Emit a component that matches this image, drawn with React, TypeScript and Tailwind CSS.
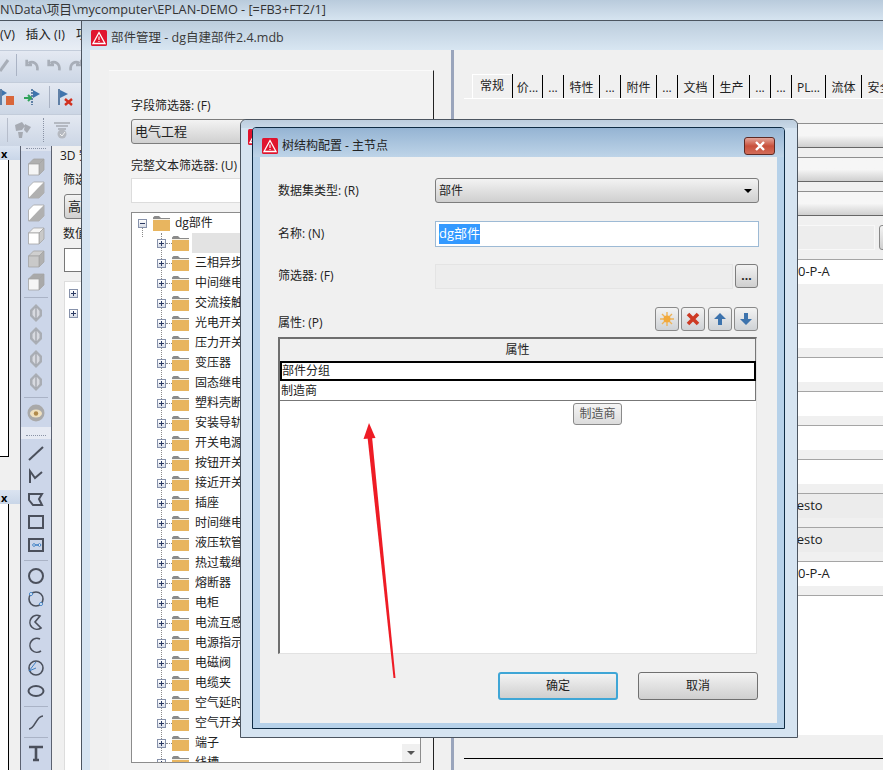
import React from "react";

const FONT = "font-['Open_Sans','Noto_Sans_CJK_SC',sans-serif]";

const TREE_ROWS = [
  "",
  "三相异步电机",
  "中间继电器",
  "交流接触器",
  "光电开关",
  "压力开关",
  "变压器",
  "固态继电器",
  "塑料壳断路器",
  "安装导轨",
  "开关电源",
  "按钮开关",
  "接近开关",
  "插座",
  "时间继电器",
  "液压软管",
  "热过载继电器",
  "熔断器",
  "电柜",
  "电流互感器",
  "电源指示灯",
  "电磁阀",
  "电缆夹",
  "空气延时头",
  "空气开关",
  "端子",
  "线槽",
];

const TABS = [
  { label: "价...", w: 30 },
  { label: "...", w: 21 },
  { label: "特性", w: 36 },
  { label: "...", w: 21 },
  { label: "附件", w: 36 },
  { label: "...", w: 21 },
  { label: "文档", w: 36 },
  { label: "生产", w: 36 },
  { label: "...", w: 21 },
  { label: "...", w: 21 },
  { label: "PL...", w: 34 },
  { label: "流体", w: 36 },
  { label: "安全", w: 36 },
];

function AppIcon({ className }: { className?: string }) {
  return (
    <svg viewBox="0 0 16 16" className={className}>
      <rect width="16" height="16" rx="1.5" fill="#e0142e" />
      <path d="M8 2.5 14 13.5H2Z" fill="none" stroke="#fff" strokeWidth="1.3" />
      <path d="M8 6.5V10M8 11V12" stroke="#fff" strokeWidth="1.1" />
    </svg>
  );
}

function Folder({ className }: { className?: string }) {
  return (
    <svg viewBox="0 0 17 15" className={className}>
      <path d="M0 3V1.5L1.5 0H6L8 2H17V3Z" fill="#8b8b8b" />
      <rect y="3" width="17" height="1" fill="#f6f1e6" />
      <rect y="4" width="17" height="11" fill="#e8b55f" />
    </svg>
  );
}

function Expander({ open }: { open?: boolean }) {
  return (
    <span className="relative block h-[9px] w-[9px] shrink-0 border border-[#8792ab] bg-linear-to-b from-white to-[#d6dbe6]">
      <span className="absolute left-[1px] top-[3px] h-[1px] w-[5px] bg-[#2b3a63]" />
      {!open && <span className="absolute left-[3px] top-[1px] h-[5px] w-[1px] bg-[#2b3a63]" />}
    </span>
  );
}

function Cube({ top, side, front }: { top: string; side: string; front: string }) {
  return (
    <svg viewBox="0 0 18 18" className="h-[18px] w-[18px]">
      <path d="M1.5 6 6.5 1H17L12 6Z" fill={top} stroke="#a5a5a5" strokeWidth=".8" />
      <path d="M12 6 17 1V12L12 17Z" fill={side} stroke="#a5a5a5" strokeWidth=".8" />
      <path d="M1.5 6H12V17H1.5Z" fill={front} stroke="#a5a5a5" strokeWidth=".8" />
    </svg>
  );
}

function SplitCube() {
  return (
    <svg viewBox="0 0 18 18" className="h-[18px] w-[18px]">
      <path d="M1.5 6 6.5 1H17V12L12 17H1.5Z" fill="#fff" stroke="#a5a5a5" strokeWidth=".8" />
      <path d="M1.5 17 12 6 17 1V12L12 17Z" fill="#b0b0b0" />
    </svg>
  );
}

function Leaf() {
  return (
    <svg viewBox="0 0 14 18" className="h-[18px] w-[14px]">
      <path d="M7 0 13 6V12L7 18 1 12V6Z" fill="#a9adb4" />
      <path d="M7 3 10.5 7V11L7 15 3.5 11V7Z" fill="#d8dae0" />
      <path d="M7 3V15" stroke="#8f9299" />
    </svg>
  );
}

function ToolSep() {
  return <div className="my-[6px] h-[1px] w-[24px] bg-[#aab3c6]" />;
}

function ThinSep() {
  return <div className="my-[3.5px] h-[1px] w-[24px] bg-[#aab3c6]" />;
}

function Tool({ children }: { children: React.ReactNode }) {
  return (
    <svg viewBox="0 0 18 18" className="my-[2.5px] h-[18px] w-[18px]" fill="none" stroke="#4b505c" strokeWidth="2">
      {children}
    </svg>
  );
}

function Toolbox() {
  return (
    <div className="flex h-full w-[32px] flex-col items-center border-x border-[#5b6170] bg-[#ccd6e9]">
      <div className="flex w-full justify-center bg-[#dde3ef] py-[2px]">
        <div className="w-[20px] border-t border-dotted border-[#8a93a5]" />
      </div>
      <div className="mt-[7px] flex flex-col items-center gap-[5px]">
        <Cube top="#b0b0b0" side="#b0b0b0" front="#f5f5f5" />
        <SplitCube />
        <SplitCube />
        <Cube top="#f5f5f5" side="#c9c9c9" front="#fff" />
        <Cube top="#cfcfcf" side="#b0b0b0" front="#c9c9c9" />
        <Cube top="#a9a9a9" side="#a9a9a9" front="#f5f5f5" />
      </div>
      <ToolSep />
      <div className="flex flex-col items-center gap-[5px]">
        <Leaf />
        <Leaf />
        <Leaf />
        <Leaf />
      </div>
      <ToolSep />
      <svg viewBox="0 0 18 18" className="h-[18px] w-[18px] shrink-0">
        <circle cx="9" cy="9" r="8.5" fill="#a9a9a9" />
        <ellipse cx="9" cy="9.5" rx="6" ry="4" fill="#efe0bf" />
        <circle cx="9" cy="9.5" r="2.2" fill="#b08a4a" />
      </svg>
      <div className="mt-[5px] flex h-[12px] w-full shrink-0 justify-center bg-[#e6eaf3] pt-[8px]">
        <div className="w-[20px] border-t border-dotted border-[#8a93a5]" />
      </div>
      <div className="mt-[2px] flex flex-col items-center">
        <Tool>
          <path d="M2 16 16 3" />
        </Tool>
        <Tool>
          <path d="M3 16V4L8 11 15 5" />
        </Tool>
        <Tool>
          <path d="M2 4H15L12 9 15 15H6L2 10Z" />
        </Tool>
        <Tool>
          <rect x="2" y="3" width="14" height="12" />
        </Tool>
        <Tool>
          <rect x="2" y="3" width="14" height="12" />
          <path d="M7 9H12" stroke="#3f7fc4" strokeWidth="1.5" />
          <circle cx="7" cy="9" r="1.3" stroke="#3f7fc4" strokeWidth="1" fill="#fff" />
          <circle cx="12.5" cy="9" r="1.3" stroke="#3f7fc4" strokeWidth="1" fill="#fff" />
        </Tool>
        <ThinSep />
        <Tool>
          <circle cx="9" cy="9" r="7" />
        </Tool>
        <Tool>
          <circle cx="9" cy="9" r="7" strokeWidth="1.6" />
          <circle cx="4" cy="4" r="1.5" stroke="#3f7fc4" strokeWidth="1" fill="#fff" />
          <circle cx="14" cy="14" r="1.5" stroke="#3f7fc4" strokeWidth="1" fill="#fff" />
        </Tool>
        <Tool>
          <path d="M13 3A7 7 0 1 0 14 15L8 9Z" strokeWidth="1.6" />
        </Tool>
        <Tool>
          <path d="M13 3A7 7 0 1 0 14 15" strokeWidth="1.6" />
        </Tool>
        <Tool>
          <circle cx="9" cy="9" r="7" strokeWidth="1.6" />
          <path d="M2 12 9 3M2 12 9 9" stroke="#3f7fc4" strokeWidth="1" />
        </Tool>
        <Tool>
          <ellipse cx="9" cy="9" rx="7.5" ry="5" />
        </Tool>
        <ThinSep />
        <Tool>
          <path d="M2 16C8 16 9 3 16 3" strokeWidth="1.6" />
        </Tool>
        <ThinSep />
        <Tool>
          <path d="M2 3H16M9 3V16M6 16H12" strokeWidth="2.6" />
        </Tool>
      </div>
    </div>
  );
}

function PaneHeader() {
  return (
    <div className="flex h-[14px] shrink-0 items-center bg-linear-to-b from-[#dbe4f1] to-[#c9d6e8] pl-[1px] text-[11px] font-bold leading-none text-black">
      x
    </div>
  );
}

function SideDock() {
  return (
    <div className="flex h-full w-[20px] flex-col bg-[#f0f0f0]">
      <div className="flex h-[344px] flex-col">
        <PaneHeader />
        <div className="h-[297px] w-[9px] border-r border-b border-black bg-white" />
      </div>
      <div className="flex flex-1 flex-col">
        <PaneHeader />
        <div className="flex-1 w-[9px] border-r border-black bg-white" />
      </div>
    </div>
  );
}

function GreyUndo({ flip }: { flip?: boolean }) {
  return (
    <svg viewBox="0 0 18 18" className={`h-[16px] w-[16px] ${flip ? "-scale-x-100" : ""}`} fill="none" stroke="#a8aeb8" strokeWidth="3">
      <path d="M15 15C16 7 10 4 5 7M3 3V9H9" />
    </svg>
  );
}

function Toolbars() {
  return (
    <div className="shrink-0 text-[12px] text-[#222]">
      <div className="flex h-[29px] items-center gap-[11px] bg-linear-to-b from-[#d3deeb] to-[#e9eef5] pl-0 pr-2 text-[12.5px]">
        <span>(V)</span>
        <span>插入 (I)</span>
        <span>项目</span>
      </div>
      <div className="flex h-[32px] items-center gap-[6px] border-t border-[#c3ccda] bg-linear-to-b from-[#e4e9f2] to-[#ccd6e5] pb-[3px]">
        <svg viewBox="0 0 10 18" className="h-[18px] w-[10px]">
          <path d="M0 15 8 4" stroke="#a8aeb8" strokeWidth="3" />
        </svg>
        <div className="h-[22px] w-[1px] bg-[#aab3c4]" />
        <div className="ml-[1px] flex gap-[6px]">
          <GreyUndo />
          <GreyUndo />
          <GreyUndo flip />
        </div>
      </div>
      <div className="flex h-[32px] items-center border-t border-[#c3ccda] bg-linear-to-b from-[#e4e9f2] to-[#ccd6e5] pb-[3px]">
        <svg viewBox="0 0 16 18" className="h-[18px] w-[16px]">
          <path d="M1 1V17" stroke="#39618f" strokeWidth="1.5" />
          <path d="M2 2 7 5 2 8Z" fill="#3f74ad" />
          <rect x="6" y="8" width="8" height="9" fill="#d9663a" />
        </svg>
        <svg viewBox="0 0 18 18" className="ml-[7px] h-[18px] w-[18px]">
          <path d="M9 1V17" stroke="#39618f" strokeDasharray="2 1" strokeWidth="1.5" />
          <path d="M10 2 17 6 10 10Z" fill="#3f74ad" />
          <path d="M1 10H7M5 7 8 10 5 13" stroke="#2fa35a" strokeWidth="2" fill="none" />
        </svg>
        <div className="ml-[8px] h-[22px] w-[1px] bg-[#aab3c4]" />
        <svg viewBox="0 0 18 18" className="ml-[7px] h-[18px] w-[18px]">
          <path d="M2 1V17" stroke="#39618f" strokeWidth="1.5" />
          <path d="M3 2 11 6 3 10Z" fill="#3f74ad" />
          <path d="M8 11 15 17M15 11 8 17" stroke="#d1301f" strokeWidth="2.4" />
        </svg>
      </div>
      <div className="flex h-[32px] items-center border-t border-[#c3ccda] bg-linear-to-b from-[#e4e9f2] to-[#ccd6e5] pb-[2px]">
        <div className="ml-[7px] h-[24px] w-[1px] bg-[#b6bdcb]" />
        <svg viewBox="0 0 18 18" className="ml-[6px] h-[18px] w-[18px]">
          <path d="M1 4 8 1 11 5 8 9 2 10ZM11 3 17 6 13 12 10 9ZM4 11 9 11 8 17 5 17Z" fill="#a6aab2" />
        </svg>
        <div className="ml-[11px] h-[24px] w-[1px] border-l border-dotted border-[#8a93a5]" />
        <svg viewBox="0 0 18 18" className="ml-[9px] h-[18px] w-[18px]">
          <path d="M1 2H17M3 5H15M5 8H13" stroke="#a6aab2" strokeWidth="1.5" />
          <circle cx="9" cy="13" r="4.5" fill="#b5b9c0" />
          <path d="M7 13 9 15 12 11" stroke="#f2f2f2" fill="none" />
        </svg>
      </div>
    </div>
  );
}

function TreePanel() {
  return (
    <div className="relative mt-[9px] h-[551px] w-[290px] overflow-hidden border border-[#8c8c8c] bg-white text-[12px] text-[#222]">
      {/* dotted tree guides */}
      <div className="absolute left-[29px] top-[20px] h-[530px] border-l border-dotted border-[#8a8a8a]" />
      <div className="absolute left-[10px] top-[14px] h-[10px] border-l border-dotted border-[#8a8a8a]" />
      <div className="flex h-[20px] items-center pl-[6px]">
        <Expander open />
        <Folder className="ml-[6px] h-[15px] w-[17px]" />
        <span className="ml-[5px]">dg部件</span>
      </div>
      {TREE_ROWS.map((name, i) => (
        <div key={i} className="relative flex h-[20px] items-center pl-[25px]">
          <Expander />
          <span className="w-[6px] border-t border-dotted border-[#8a8a8a]" />
          <Folder className="h-[15px] w-[17px]" />
          {name ? <span className="ml-[6px]">{name}</span> : <span className="ml-[3px] h-[20px] w-[60px] bg-[#e3e3e3]" />}
        </div>
      ))}
      <div className="absolute bottom-0 right-0 flex h-[18px] w-[18px] items-center justify-center bg-[#f0f0f0]">
        <div className="h-0 w-0 border-x-[4px] border-t-[4px] border-x-transparent border-t-[#555]" />
      </div>
    </div>
  );
}

function LeftPane() {
  return (
    <div className="h-full w-[361px] shrink-0 bg-[#f0f0f0] pl-[19px] pt-[20px]">
      <div className="h-[700px] w-[325px] border-r border-t border-r-[#222] border-t-[#fafafa] bg-[#f2f2f2] pl-[22px] pt-[26px] text-[12px] text-[#222]">
        <div className="h-[17px] leading-[17px]">字段筛选器: (F)</div>
        <div className="mt-[5px] flex h-[25px] w-[290px] items-center rounded-[3px] border border-[#7d7d7d] bg-linear-to-b from-[#f3f3f3] to-[#d0d0d0] pl-[3px] text-[13px]">
          电气工程
        </div>
        <div className="mt-[13px] h-[17px] leading-[17px]">完整文本筛选器: (U)</div>
        <div className="mt-[4px] h-[25px] w-[290px] border border-[#dcdcdc] bg-white" />
        <TreePanel />
      </div>
    </div>
  );
}

function Tabs() {
  return (
    <div className="ml-[18px] flex h-[24px] items-end text-[12px] text-[#222]">
      <div className="flex h-[24px] w-[41px] items-center justify-center border-r border-black bg-[#f0f0f0] pb-[1px] shadow-[inset_1px_1px_0_#fff]">
        常规
      </div>
      {TABS.map((t, i) => (
        <div
          key={i}
          style={{ width: t.w }}
          className="flex h-[23px] shrink-0 items-center justify-center whitespace-nowrap border-r border-black pt-[3px]"
        >
          {t.label}
        </div>
      ))}
    </div>
  );
}

function Field({ kind, text, pad }: { kind: "select" | "white" | "grey"; text?: string; pad?: string }) {
  const cls =
    kind === "select"
      ? "border-b border-t border-b-[#666] border-t-[#8f8f8f] bg-linear-to-b from-[#f6f6f6] from-50% to-[#cfcfcf]"
      : kind === "white"
        ? "border-t border-t-[#a5a5a5] bg-white"
        : "border-t border-t-[#a5a5a5] bg-[#ececec]";
  return <div className={`flex h-[25px] items-center text-[13px] text-[#222] ${pad} ${cls}`}>{text}</div>;
}

function RightPane() {
  return (
    <div className="h-full flex-1 bg-[#f0f0f0] pt-[24px]">
      <Tabs />
      <div className="ml-[10px] border-t border-white pt-[24px]">
        <div className="flex flex-col gap-[9px]">
          <Field kind="select" />
          <Field kind="select" />
          <Field kind="select" />
          <div className="flex h-[25px] gap-[4px]">
            <div className="w-[411px] border border-[#f8f8f8] bg-[#ededed]" />
            <div className="flex-1 rounded-l-[3px] border border-[#888] bg-linear-to-b from-[#f3f3f3] to-[#d0d0d0]" />
          </div>
          <Field kind="white" text="0-P-A" pad="pl-[334px]" />
          <div className="h-[21px]" />
          <Field kind="white" />
          <Field kind="white" />
          <Field kind="white" />
          <Field kind="white" />
          <Field kind="white" />
          <Field kind="grey" text="Festo" pad="pl-[326px]" />
          <Field kind="grey" text="Festo" pad="pl-[326px]" />
          <Field kind="white" text="0-P-A" pad="pl-[334px]" />
          <div className="h-[140px] border-t border-t-[#a5a5a5] bg-white" />
        </div>
        <div className="h-[24px] border-b border-black bg-[#f0f0f0]" />
      </div>
    </div>
  );
}

function PartsWindow() {
  return (
    <div className={`absolute left-[81px] top-[20px] flex h-[750px] w-[802px] flex-col border-l border-[#4c5560] bg-[#d6e4f1] ${FONT}`}>
      <div className="flex h-[30px] shrink-0 items-center border-t border-[#4c5560] bg-linear-to-b from-[#bccddd] to-[#d8e6f2] pl-[9px] pt-[5px] text-[12.5px] text-[#3a3a3a]">
        <AppIcon className="h-[16px] w-[16px]" />
        <span className="ml-[4px]">部件管理 - dg自建部件2.4.mdb</span>
      </div>
      <div className="ml-[8px] flex flex-1 overflow-hidden">
        <LeftPane />
        <div className="w-[3px] shrink-0 bg-[#9aa5bc]" />
        <RightPane />
      </div>
    </div>
  );
}

function IconButton({ children }: { children: React.ReactNode }) {
  return (
    <div className="flex h-[24px] w-[24px] items-center justify-center rounded-[3px] border border-[#8a8a8a] bg-linear-to-b from-[#f3f3f3] to-[#cfd2d6]">
      {children}
    </div>
  );
}

function FormRow({ label, children, className }: { label: string; children: React.ReactNode; className?: string }) {
  return (
    <div className={`flex items-center ${className}`}>
      <div className="w-[157px] shrink-0">{label}</div>
      {children}
    </div>
  );
}

function ConfigDialog() {
  return (
    <div className={`absolute left-[240px] top-[119px] h-[619px] w-[558px] rounded-t-[6px] border border-[#4c5560] bg-[#d6e4f1] ${FONT}`}>
      <div className="h-[8px] rounded-t-[6px] bg-linear-to-b from-[#bccddd] to-[#c9d9e8]" />
      <AppIcon className="absolute left-[7px] top-[9px] h-[16px] w-[16px]" />
      {/* the dialog on top */}
      <div className="absolute left-[11px] top-[7px] flex h-[602px] w-[533px] flex-col rounded-t-[4px] border border-[#0f2c44] bg-[#b6d1e9] px-[7px] pb-[5px]">
        <div className="-mx-[7px] flex h-[29px] shrink-0 items-center rounded-t-[3px] bg-linear-to-b from-[#95b4d3] to-[#bed4e8] pl-[9px] pt-[6px] text-[12px] text-[#222]">
          <AppIcon className="h-[16px] w-[16px]" />
          <span className="ml-[4px]">树结构配置 - 主节点</span>
          <div className="ml-auto mr-[9px] flex h-[18px] w-[31px] items-center justify-center rounded-[3px] border border-[#5d2a24] bg-linear-to-b from-[#e3a59a] via-[#c8503c] to-[#d26c58]">
            <svg viewBox="0 0 12 10" className="h-[10px] w-[12px]">
              <path d="M2 1 10 9M10 1 2 9" stroke="#fff" strokeWidth="2.4" />
            </svg>
          </div>
        </div>
        <div className="flex-1 bg-[#f0f0f0] pl-[18px] pt-[21px] text-[12px] text-[#222]">
          <FormRow label="数据集类型: (R)" className="h-[25px]">
            <div className="flex h-[25px] w-[324px] items-center justify-between rounded-[3px] border border-[#7d7d7d] bg-linear-to-b from-[#f3f3f3] to-[#cfcfcf] pl-[3px] pr-[6px]">
              部件
              <div className="h-0 w-0 border-x-[4px] border-t-[4px] border-x-transparent border-t-black" />
            </div>
          </FormRow>
          <FormRow label="名称: (N)" className="mt-[18px] h-[26px]">
            <div className="flex h-[26px] w-[324px] items-center border border-[#9dbad5] bg-white pl-[3px] text-[13px]">
              <span className="bg-[#3399ff] text-white">dg部件</span>
            </div>
          </FormRow>
          <FormRow label="筛选器: (F)" className="mt-[16px] h-[26px]">
            <div className="h-[25px] w-[298px] border border-[#e4e4e4] bg-[#ededed]" />
            <div className="ml-[2px] flex h-[24px] w-[23px] items-center justify-center rounded-[3px] border border-[#7d7d7d] bg-linear-to-b from-[#f3f3f3] to-[#cfcfcf] text-[12px] font-bold leading-none">
              ...
            </div>
          </FormRow>
          <div className="mt-[18px] flex h-[24px] w-[480px] items-end justify-between">
            <div className="leading-[17px]">属性: (P)</div>
            <div className="flex items-center gap-[2.5px]">
              <IconButton>
                <svg viewBox="0 0 14 14" className="h-[14px] w-[14px]">
                  <path d="M7 0V14M0 7H14M2 2 12 12M12 2 2 12" stroke="#eeb356" strokeWidth="1.4" />
                  <circle cx="7" cy="7" r="3.5" fill="#f2a93b" />
                </svg>
              </IconButton>
              <IconButton>
                <svg viewBox="0 0 14 14" className="h-[14px] w-[14px]">
                  <path d="M2 2 12 12M12 2 2 12" stroke="#cd3a24" strokeWidth="3.6" />
                </svg>
              </IconButton>
              <IconButton>
                <svg viewBox="0 0 14 14" className="h-[14px] w-[14px]">
                  <path d="M7 1 13 7H9V13H5V7H1Z" fill="#3d73ad" />
                </svg>
              </IconButton>
              <IconButton>
                <svg viewBox="0 0 14 14" className="h-[14px] w-[14px]">
                  <path d="M7 13 13 7H9V1H5V7H1Z" fill="#3d73ad" />
                </svg>
              </IconButton>
            </div>
          </div>
          <div className="relative mt-[6px] h-[317px] w-[479px] border-b border-l-2 border-r border-t-2 border-b-[#e2e2e2] border-l-[#6e6e6e] border-r-[#e2e2e2] border-t-[#6e6e6e] bg-white">
            <div className="flex h-[22px] items-center justify-center border-r border-[#777] bg-[#f0f0f0]">属性</div>
            <div className="flex h-[20px] items-center border-2 border-black">部件分组</div>
            <div className="flex h-[20px] items-center border-b border-r border-[#777] pl-[1px]">制造商</div>
            <div className="absolute left-[293px] top-[64px] flex h-[22px] w-[49px] items-center justify-center rounded-[3px] border border-[#8a8a8a] bg-linear-to-b from-[#f5f5f5] to-[#dcdcdc] text-[#555]">
              制造商
            </div>
          </div>
          <div className="mt-[18px] flex w-[480px] justify-end gap-[20px]">
            <div className="flex h-[28px] w-[120px] items-center justify-center rounded-[3px] border-2 border-[#3fa6d6] bg-linear-to-b from-[#f3f3f3] to-[#cfcfcf]">
              确定
            </div>
            <div className="flex h-[28px] w-[120px] items-center justify-center rounded-[3px] border border-[#707070] bg-linear-to-b from-[#f3f3f3] to-[#cfcfcf]">
              取消
            </div>
          </div>
        </div>
      </div>
    </div>
  );
}

export default function App() {
  return (
    <div className={`relative flex h-[770px] w-[883px] flex-col overflow-hidden bg-[#f0f0f0] ${FONT}`}>
      <div className="flex h-[20px] shrink-0 items-center overflow-hidden whitespace-nowrap bg-linear-to-b from-[#b9cbdc] to-[#d6e4f0] text-[12.7px] text-[#333]">
        N\Data\项目\mycomputer\EPLAN-DEMO - [=FB3+FT2/1]
      </div>
      <div className="flex flex-1 flex-col overflow-hidden border-t border-[#4c5560]">
        <Toolbars />
        <div className="flex flex-1 overflow-hidden">
          <SideDock />
          <Toolbox />
          <div className="ml-[5px] flex-1 pl-[7px]">
            <div className="-ml-[4px] pt-[1px] text-[12px] text-[#222]">3D 安装</div>
            <div className="-ml-[1px] pt-[6px] text-[12px] text-[#222]">筛选器</div>
            <div className="mt-[5px] flex h-[25px] items-center rounded-l-[3px] border border-[#7d7d7d] bg-linear-to-b from-[#f3f3f3] to-[#d0d0d0] pl-[3px] text-[13px] text-[#222]">
              高级
            </div>
            <div className="-ml-[1px] mt-[6px] text-[12px] text-[#222]">数值</div>
            <div className="mt-[5px] h-[24px] border border-[#777] bg-white" />
            <div className="mt-[9px] flex h-[490px] flex-col gap-[11px] border-l border-t border-[#ddd] bg-white pl-[4px] pt-[7px]">
              <Expander />
              <Expander />
            </div>
          </div>
        </div>
      </div>
      <PartsWindow />
      <ConfigDialog />
      {/* red annotation arrow */}
      <svg viewBox="0 0 883 770" className="pointer-events-none absolute inset-0 h-[770px] w-[883px]">
        <path d="M395.5 678 393.5 678 367.5 437 372 436.5Z" fill="#ee1c25" />
        <path d="M369 423 375.5 438 363.5 439Z" fill="#ee1c25" />
      </svg>
    </div>
  );
}
